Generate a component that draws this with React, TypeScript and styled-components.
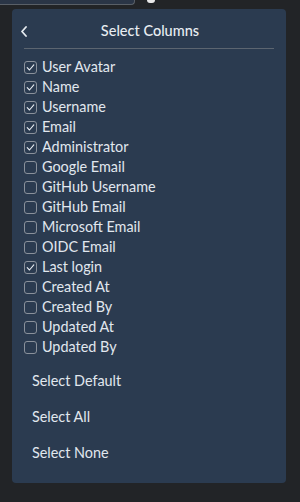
import React, { useState } from "react";
import styled, { createGlobalStyle } from "styled-components";

const GlobalStyle = createGlobalStyle`
  html, body {
    margin: 0;
    padding: 0;
    background: #222427;
    font-family: Lato, "Noto Sans", sans-serif;
  }
`;

type Column = { label: string; checked: boolean };

const initialColumns: Column[] = [
  { label: "User Avatar", checked: true },
  { label: "Name", checked: true },
  { label: "Username", checked: true },
  { label: "Email", checked: true },
  { label: "Administrator", checked: true },
  { label: "Google Email", checked: false },
  { label: "GitHub Username", checked: false },
  { label: "GitHub Email", checked: false },
  { label: "Microsoft Email", checked: false },
  { label: "OIDC Email", checked: false },
  { label: "Last login", checked: true },
  { label: "Created At", checked: false },
  { label: "Created By", checked: false },
  { label: "Updated At", checked: false },
  { label: "Updated By", checked: false },
];

export default function App() {
  const [columns, setColumns] = useState<Column[]>(initialColumns);

  const toggle = (index: number) => {
    const next = [...columns];
    next[index] = { ...next[index], checked: !next[index].checked };
    setColumns(next);
  };

  const setAll = (value: boolean) =>
    setColumns(columns.map((c) => ({ ...c, checked: value })));

  return (
    <>
      <GlobalStyle />
      <Page>
        <TopStrip>
          <SearchStub />
          <CogStub />
        </TopStrip>
        <Panel>
          <Header>
            <BackButton aria-label="Back">
              <svg width="8" height="11" viewBox="0 0 8 11">
                <path
                  d="M6 1 L2 5.5 L6 10"
                  fill="none"
                  stroke="#e6ebf0"
                  strokeWidth="1.8"
                  strokeLinecap="round"
                  strokeLinejoin="round"
                />
              </svg>
            </BackButton>
            <Title>Select Columns</Title>
          </Header>
          <List>
            {columns.map((col, index) => (
              <Row key={col.label} onClick={() => toggle(index)}>
                <Box>
                  {col.checked && (
                    <svg width="11" height="11" viewBox="0 0 11 11">
                      <path
                        d="M2.2 5.6 L4.5 8 L8.8 2.8"
                        fill="none"
                        stroke="#e6ebf0"
                        strokeWidth="1.1"
                        strokeLinecap="round"
                        strokeLinejoin="round"
                      />
                    </svg>
                  )}
                </Box>
                <Label>{col.label}</Label>
              </Row>
            ))}
          </List>
          <Actions>
            <ActionButton onClick={() => setColumns(initialColumns)}>
              Select Default
            </ActionButton>
            <ActionButton onClick={() => setAll(true)}>Select All</ActionButton>
            <ActionButton onClick={() => setAll(false)}>Select None</ActionButton>
          </Actions>
        </Panel>
      </Page>
    </>
  );
}

const Page = styled.div`
  width: 300px;
  height: 502px;
  overflow: hidden;
`;

const TopStrip = styled.div`
  height: 9px;
  display: flex;
  align-items: flex-start;
`;

const SearchStub = styled.div`
  width: 134px;
  height: 4px;
  background: #2a3546;
  border-right: 1px solid #595f67;
  border-bottom: 1px solid #595f67;
  border-bottom-right-radius: 4px;
`;

const CogStub = styled.div`
  width: 8px;
  height: 3px;
  margin-left: 12px;
  background: #e8e8e8;
  border-radius: 0 0 4px 4px;
`;

const Panel = styled.div`
  margin-left: 12px;
  width: 274px;
  height: 474px;
  box-sizing: border-box;
  background: #2b3b50;
  border-radius: 4px;
  padding: 0 12px 12px;
  display: flex;
  flex-direction: column;
`;

const Header = styled.div`
  position: relative;
  display: flex;
  align-items: center;
  justify-content: center;
  height: 40px;
  padding-top: 4px;
  box-sizing: border-box;
  border-bottom: 1px solid #5c6570;
`;

const BackButton = styled.button`
  position: absolute;
  left: -4px;
  top: 17px;
  background: none;
  border: none;
  padding: 0;
  display: flex;
  cursor: pointer;
`;

const Title = styled.div`
  color: #e8edf2;
  font-size: 14.5px;
  font-weight: 500;
  line-height: 18px;
  padding-left: 2px;
`;

const List = styled.div`
  display: flex;
  flex-direction: column;
  margin-top: 8px;
`;

const Row = styled.label`
  display: flex;
  align-items: center;
  height: 20px;
  gap: 5px;
  cursor: pointer;
`;

const Box = styled.span`
  width: 13px;
  height: 13px;
  box-sizing: border-box;
  border: 1px solid #8a919b;
  border-radius: 3px;
  display: flex;
  align-items: center;
  justify-content: center;
  flex-shrink: 0;
`;

const Label = styled.span`
  color: #e1e7ee;
  font-size: 14.4px;
  line-height: 18px;
`;

const Actions = styled.div`
  display: flex;
  flex-direction: column;
  margin-top: 5px;
`;

const ActionButton = styled.button`
  height: 36px;
  background: none;
  border: none;
  padding: 0 0 0 8px;
  text-align: left;
  color: #e1e7ee;
  font-family: Lato, "Noto Sans", sans-serif;
  font-size: 14.4px;
  cursor: pointer;
`;
